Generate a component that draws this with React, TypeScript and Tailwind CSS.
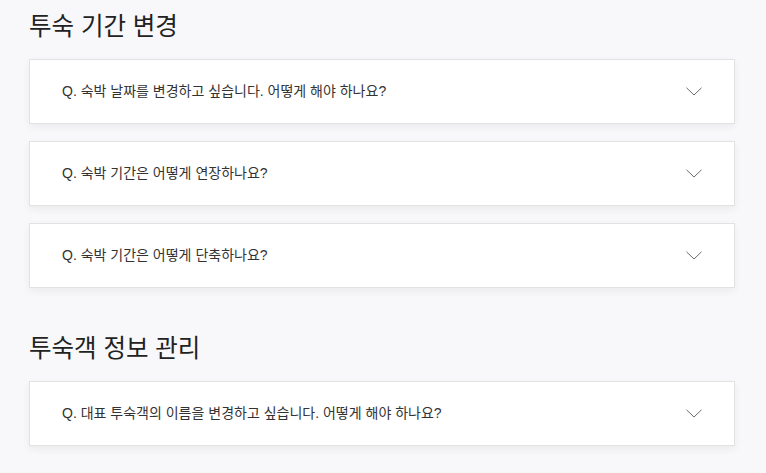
const sections = [
  {
    title: "투숙 기간 변경",
    items: [
      "Q. 숙박 날짜를 변경하고 싶습니다. 어떻게 해야 하나요?",
      "Q. 숙박 기간은 어떻게 연장하나요?",
      "Q. 숙박 기간은 어떻게 단축하나요?",
    ],
  },
  {
    title: "투숙객 정보 관리",
    items: ["Q. 대표 투숙객의 이름을 변경하고 싶습니다. 어떻게 해야 하나요?"],
  },
];

function Chevron() {
  return (
    <svg width="16" height="9" viewBox="0 0 16 9" fill="none">
      <path d="M0.5 0.8 L8 8 L15.5 0.8" stroke="#6b6b6b" strokeWidth="1" />
    </svg>
  );
}

export default function App() {
  return (
    <div
      className="min-h-screen bg-[#f8f8fa] pl-[29px] pr-[31px] pt-[9px]"
      style={{ fontFamily: '"Liberation Sans", "Noto Sans CJK KR", sans-serif' }}
    >
      {sections.map((s, si) => (
        <section key={s.title} className={si > 0 ? "mt-[43px]" : ""}>
          <h2 className="mb-[14px] h-[36px] text-[24.5px] leading-[36px] text-[#222]">{s.title}</h2>
          <div className="flex flex-col gap-[17px]">
            {s.items.map((q) => (
              <div
                key={q}
                className="flex h-[65px] items-center justify-between border border-[#e2e2e2] bg-white pl-[32px] pr-[32px] shadow-[0_3px_8px_rgba(0,0,0,0.06)]"
              >
                <span className="text-[14px] text-[#333]">{q}</span>
                <Chevron />
              </div>
            ))}
          </div>
        </section>
      ))}
    </div>
  );
}
